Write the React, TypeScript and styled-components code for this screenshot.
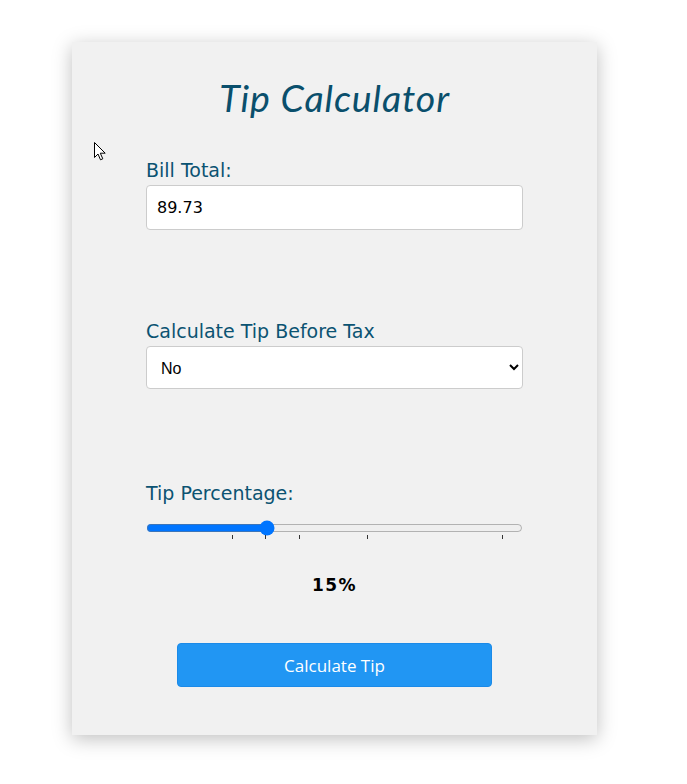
import React, { useState } from "react";
import styled, { createGlobalStyle } from "styled-components";

const GlobalStyle = createGlobalStyle`
  html, body { margin: 0; padding: 0; background: #ffffff; }
  body { font-family: "DejaVu Sans", Verdana, sans-serif; }
  * { box-sizing: border-box; }
`;

const Page = styled.div`
  position: relative;
  padding: 42px 0 40px 72px;
`;

const Card = styled.div`
  width: 525px;
  background: #f1f1f1;
  box-shadow: 0 4px 18px rgba(0, 0, 0, 0.25);
  padding: 34px 74px 48px;
  display: flex;
  flex-direction: column;
`;

const Title = styled.h1`
  margin: 0;
  font-family: "Lato", "Open Sans", sans-serif;
  font-style: italic;
  font-weight: 400;
  font-size: 37.5px;
  line-height: 44px;
  letter-spacing: 0.9px;
  color: #0a4f6c;
  text-align: center;
`;

const Group = styled.div<{ $top: number }>`
  display: flex;
  flex-direction: column;
  margin-top: ${(p) => p.$top}px;
`;

const Label = styled.label`
  display: block;
  font-family: "DejaVu Sans", Verdana, sans-serif;
  font-size: 19px;
  line-height: 22px;
  color: #0b5372;
  margin-bottom: 4px;
`;

const TextInput = styled.input`
  width: 100%;
  height: 45px;
  border: 1px solid #cccccc;
  border-radius: 4px;
  background: #ffffff;
  padding: 0 10px;
  font-family: "DejaVu Sans", Verdana, sans-serif;
  font-size: 16px;
  color: #000000;
  outline: none;
`;

const Select = styled.select`
  width: 100%;
  height: 43px;
  border: 1px solid #cccccc;
  border-radius: 4px;
  background: #ffffff;
  padding: 2px 10px 0;
  font-family: "Liberation Sans", Arial, sans-serif;
  font-size: 16px;
  color: #000000;
  outline: none;
`;

const SliderWrap = styled.div`
  position: relative;
  margin-top: 12px;
  height: 16px;
`;

const Range = styled.input`
  display: block;
  width: 100%;
  height: 16px;
  margin: 0;
  accent-color: #0075ff;
`;

const Ticks = styled.svg`
  position: absolute;
  left: 0;
  top: 15px;
  pointer-events: none;
`;

const Result = styled.div`
  margin-top: 39px;
  text-align: center;
  font-family: "DejaVu Sans", Verdana, sans-serif;
  font-weight: 700;
  font-size: 17px;
  line-height: 20px;
  letter-spacing: 1.5px;
  color: #000000;
`;

const Button = styled.button`
  align-self: center;
  margin-top: 48px;
  width: 315px;
  height: 44px;
  border: 1px solid #1b8ae8;
  border-radius: 4px;
  background: #2196f3;
  color: #ffffff;
  font-family: "Open Sans", "Noto Sans", sans-serif;
  font-size: 17px;
  cursor: pointer;
`;

const Cursor = styled.svg`
  position: absolute;
  left: 94px;
  top: 142px;
  pointer-events: none;
`;

const tickXs = [86, 119, 153, 221, 356];

export default function App() {
  const [bill, setBill] = useState("89.73");
  const [before, setBefore] = useState("no");
  const [tip, setTip] = useState(15);

  return (
    <>
      <GlobalStyle />
      <Page>
        <Card>
          <Title>Tip Calculator</Title>
          <Group $top={39}>
            <Label htmlFor="bill">Bill Total:</Label>
            <TextInput
              id="bill"
              type="text"
              value={bill}
              onChange={(e) => setBill(e.target.value)}
            />
          </Group>
          <Group $top={90}>
            <Label htmlFor="before">Calculate Tip Before Tax</Label>
            <Select id="before" value={before} onChange={(e) => setBefore(e.target.value)}>
              <option value="no">No</option>
              <option value="yes">Yes</option>
            </Select>
          </Group>
          <Group $top={93}>
            <Label htmlFor="tip">Tip Percentage:</Label>
            <SliderWrap>
              <Range
                id="tip"
                type="range"
                min={0}
                max={48}
                value={tip}
                onChange={(e) => setTip(Number(e.target.value))}
              />
              <Ticks width="377" height="5" viewBox="0 0 377 5">
                {tickXs.map((x) => (
                  <line key={x} x1={x + 0.5} y1="0" x2={x + 0.5} y2="4" stroke="#333" strokeWidth="1" />
                ))}
              </Ticks>
            </SliderWrap>
          </Group>
          <Result>{tip}%</Result>
          <Button type="button">Calculate Tip</Button>
        </Card>
        <Cursor width="13" height="20" viewBox="0 0 13 20">
          <path
            d="M0.5 0.5 L0.5 15.5 L4 12 L6.5 17.8 L8.8 16.8 L6.3 11.2 L11.2 11.2 Z"
            fill="#ffffff"
            stroke="#000000"
            strokeWidth="1"
            strokeLinejoin="round"
          />
        </Cursor>
      </Page>
    </>
  );
}
